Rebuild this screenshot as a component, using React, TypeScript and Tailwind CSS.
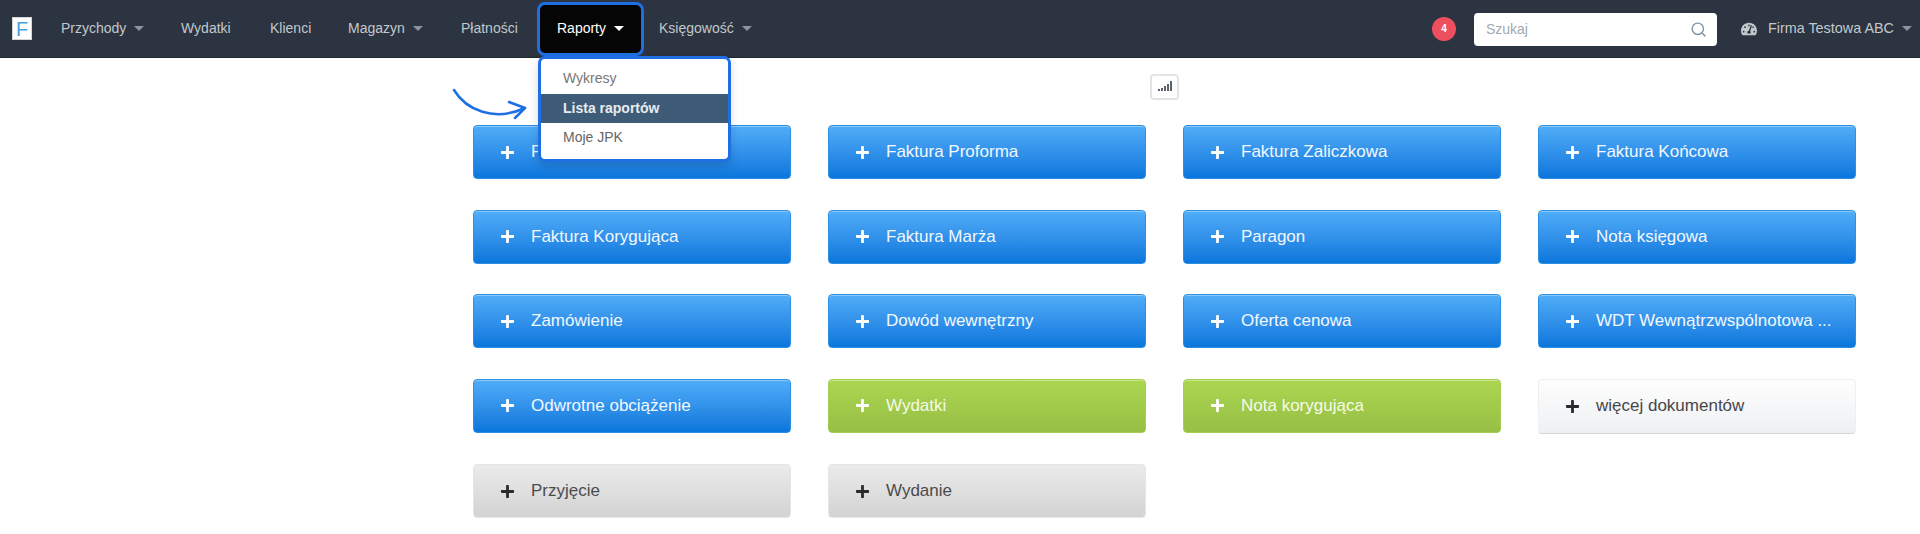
import { FaPlus, FaTachometerAlt } from "react-icons/fa";
import { Search } from "lucide-react";

type Kind = "blue" | "green" | "gray" | "white";

const kinds: Record<Kind, string> = {
  blue: "h-[54px] bg-gradient-to-b from-[#50adf8] to-[#0876dc] border-[#2d8fe4] text-[#f2f8fe] shadow-[inset_0_1px_0_rgba(255,255,255,0.35)]",
  green: "h-[54px] bg-gradient-to-b from-[#abd650] to-[#97bf45] border-[#a5cf52] text-[#f6fae9] shadow-[inset_0_1px_0_rgba(255,255,255,0.35)]",
  gray: "h-[54px] bg-gradient-to-b from-[#ebebeb] to-[#d3d3d3] border-[#e6e6e6] text-[#4b4b4d]",
  white: "h-[55px] bg-gradient-to-b from-[#fefefe] to-[#eef0f2] border-[#efefef] border-b-[#d5d5d5] text-[#46464a]",
};

const rows: [string, Kind][] = [
  ["Faktura VAT", "blue"],
  ["Faktura Proforma", "blue"],
  ["Faktura Zaliczkowa", "blue"],
  ["Faktura Końcowa", "blue"],
  ["Faktura Korygująca", "blue"],
  ["Faktura Marża", "blue"],
  ["Paragon", "blue"],
  ["Nota księgowa", "blue"],
  ["Zamówienie", "blue"],
  ["Dowód wewnętrzny", "blue"],
  ["Oferta cenowa", "blue"],
  ["WDT Wewnątrzwspólnotowa ...", "blue"],
  ["Odwrotne obciążenie", "blue"],
  ["Wydatki", "green"],
  ["Nota korygująca", "green"],
  ["więcej dokumentów", "white"],
  ["Przyjęcie", "gray"],
  ["Wydanie", "gray"],
];

function Caret({ color = "border-t-[#8c949c]" }: { color?: string }) {
  return <span className={`inline-block w-0 h-0 border-x-[5px] border-x-transparent border-t-[5px] ${color}`} />;
}

function NavItem({ label, caret, width }: { label: string; caret?: boolean; width: string }) {
  return (
    <a className={`flex items-center gap-2 text-[#c3c8cd] ${width}`}>
      <span>{label}</span>
      {caret && <Caret />}
    </a>
  );
}

function DocButton({ label, kind }: { label: string; kind: Kind }) {
  const iconColor = kind === "blue" || kind === "green" ? "text-white" : "text-[#2b2b2e]";
  return (
    <button className={`flex items-center w-[318px] pl-[26px] rounded-[4px] border text-[17px] whitespace-nowrap ${kinds[kind]}`}>
      <FaPlus className={`w-[15px] h-[15px] mr-[16px] ${iconColor}`} />
      <span>{label}</span>
    </button>
  );
}

export default function App() {
  return (
    <div className="relative h-[534px] w-[1920px] overflow-hidden bg-white font-['Liberation_Sans',Arial,sans-serif]">
      <header className="flex items-center h-[58px] bg-[#2b3440] border-b border-[#1f262e] text-[14px]">
        <div className="flex items-center justify-center ml-3 w-5 h-[23px] bg-white border border-[#d5d5d5] text-[#4a9fe0] text-[20px] leading-none">
          F
        </div>
        <nav className="flex items-center ml-[29px] h-full">
          <NavItem label="Przychody" caret width="w-[120px]" />
          <NavItem label="Wydatki" width="w-[89px]" />
          <NavItem label="Klienci" width="w-[78px]" />
          <NavItem label="Magazyn" caret width="w-[113px]" />
          <NavItem label="Płatności" width="w-[76px]" />
          <a className="flex items-center justify-center gap-2 w-[107px] h-[54px] bg-[#050505] border-[3px] border-[#1e6fe4] rounded-[8px] text-white font-normal">
            <span>Raporty</span>
            <Caret color="border-t-white" />
          </a>
          <a className="flex items-center gap-2 ml-[15px] text-[#c3c8cd]">
            <span>Księgowość</span>
            <Caret />
          </a>
        </nav>
        <div className="ml-auto flex items-center">
          <span className="flex items-center justify-center w-6 h-6 rounded-full bg-[#ee4f5f] text-white text-[10px] font-bold">4</span>
          <label className="flex items-center justify-between w-[243px] h-[33px] ml-[18px] mt-[2px] pl-3 pr-[10px] bg-white rounded-[4px] text-[#9aa5b1]">
            <span className="text-[14px] text-[#a2a9b3]">Szukaj</span>
            <Search className="w-[17px] h-[17px] text-[#7d93a8]" />
          </label>
          <FaTachometerAlt className="w-[16px] h-[16px] ml-6 text-[#c3c8cd]" />
          <span className="ml-[11px] text-[14.4px] text-[#c3c8cd]">Firma Testowa ABC</span>
          <span className="ml-2 mr-[8px] flex"><Caret /></span>
        </div>
      </header>

      <main className="pl-[473px]">
        <div className="flex justify-start pl-[677px] pt-4 pb-[25px]">
          <div className="flex items-end justify-center gap-[1px] w-[29px] h-[26px] pb-[7px] border-2 border-[#e4e4e4] rounded-[4px] bg-white">
            <span className="w-[2px] h-[2px] bg-[#5a626c]" />
            <span className="w-[2px] h-[3px] bg-[#5a626c]" />
            <span className="w-[2px] h-[5px] bg-[#5a626c]" />
            <span className="w-[2px] h-[7px] bg-[#5a626c]" />
            <span className="w-[2px] h-[10px] bg-[#5a626c]" />
          </div>
        </div>
        <div className="grid grid-cols-[repeat(4,318px)] gap-x-[37px] gap-y-[30.5px]">
          {rows.map(([label, kind]) => (
            <DocButton key={label} label={label} kind={kind} />
          ))}
        </div>
      </main>

      <svg className="absolute left-[452px] top-[88px] w-[76px] h-[34px]" viewBox="0 0 76 34" fill="none" stroke="#1e6fe4" strokeWidth="2.5" strokeLinecap="round" strokeLinejoin="round">
        <path d="M2 2 C14 22 42 34 73 20" />
        <path d="M57 14 L73 20 L63 30" />
      </svg>

      <div className="absolute left-[538px] top-[56px] w-[193px] h-[106px] bg-white border-[3px] border-[#1e6fe4] rounded-[7px] shadow-[0_4px_10px_rgba(0,0,0,0.15)] overflow-hidden pt-[3px] text-[14px]">
        <div className="flex items-center h-[32px] pl-[22px] text-[#777]">Wykresy</div>
        <div className="flex items-center h-[29px] pl-[22px] bg-[#3e5b78] text-[#e8ebef] font-bold">Lista raportów</div>
        <div className="flex items-center h-[29px] pl-[22px] text-[#666]">Moje JPK</div>
      </div>
    </div>
  );
}
